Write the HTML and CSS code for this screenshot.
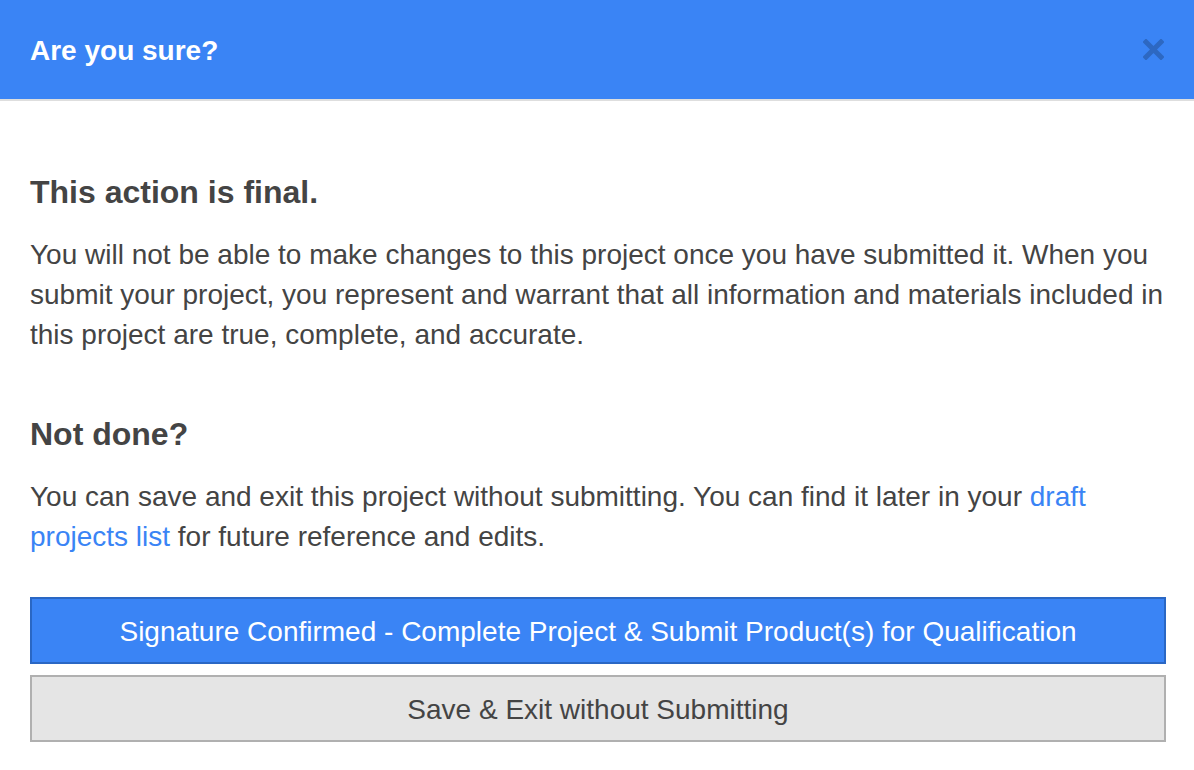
FILE: index.html
```html
<!DOCTYPE html>
<html lang="en">
<head>
    <meta charset="UTF-8">
    <meta name="viewport" content="width=device-width, initial-scale=1.0">
    <title>Are you sure?</title>
    <link rel="stylesheet" href="styles.css">
</head>
<body>
    <div class="modal">
        <!-- Header -->
        <div class="modal-header">
            <h1>Are you sure?</h1>
            <button class="close-btn" aria-label="Close">
                <svg width="21" height="21" viewBox="0 0 21 21">
                    <path d="M3 3 L18 18 M18 3 L3 18" stroke="currentColor" stroke-width="5" stroke-linecap="square"/>
                </svg>
            </button>
        </div>

        <!-- Body -->
        <div class="modal-body">
            <h2 class="first">This action is final.</h2>
            <p>You will not be able to make changes to this project once you have submitted it. When you submit your project, you represent and warrant that all information and materials included in this project are true, complete, and accurate.</p>

            <h2 class="second">Not done?</h2>
            <p>You can save and exit this project without submitting. You can find it later in your <a href="#">draft projects list</a> for future reference and edits.</p>

            <div class="actions">
                <button class="btn btn-primary">Signature Confirmed - Complete Project &amp; Submit Product(s) for Qualification</button>
                <button class="btn btn-default">Save &amp; Exit without Submitting</button>
            </div>
        </div>
    </div>
</body>
</html>
```

FILE: styles.css
```css
/* General Styles */

body {
    font-family: "Liberation Sans", Arial, sans-serif;
    margin: 0;
    background-color: #fff;
    color: #444;
}

.modal {
    width: 100%;
}

.modal-header {
    display: flex;
    align-items: center;
    justify-content: space-between;
    height: 99px;
    padding: 0 30px;
    background-color: #3a84f5;
    border-bottom: 2px solid #dedede;
}

.modal-header h1 {
    margin: 0;
    padding-top: 2px;
    font-size: 28px;
    font-weight: bold;
    color: #fff;
}

.close-btn {
    display: flex;
    padding: 0;
    border: none;
    background: none;
    color: #2d68c2;
    cursor: pointer;
}

.modal-body {
    padding: 0 28px 0 30px;
}

h2 {
    margin: 0;
    font-size: 32px;
    line-height: 40px;
    font-weight: bold;
    color: #444;
}

h2.first {
    margin-top: 71px;
}

h2.second {
    margin-top: 59px;
}

p {
    margin: 23px 0 0;
    font-size: 28px;
    line-height: 40px;
}

a {
    color: #3a84f5;
    text-decoration: none;
}

.actions {
    display: flex;
    flex-direction: column;
    gap: 11px;
    margin-top: 40px;
}

.btn {
    height: 67px;
    width: 100%;
    padding-top: 3px;
    font-family: "Liberation Sans", Arial, sans-serif;
    font-size: 28px;
    cursor: pointer;
}

.btn-primary {
    background-color: #3a84f5;
    border: 2px solid #2a67c4;
    color: #fff;
}

.btn-default {
    background-color: #e5e5e5;
    border: 2px solid #b0b0b0;
    color: #444;
}
```
